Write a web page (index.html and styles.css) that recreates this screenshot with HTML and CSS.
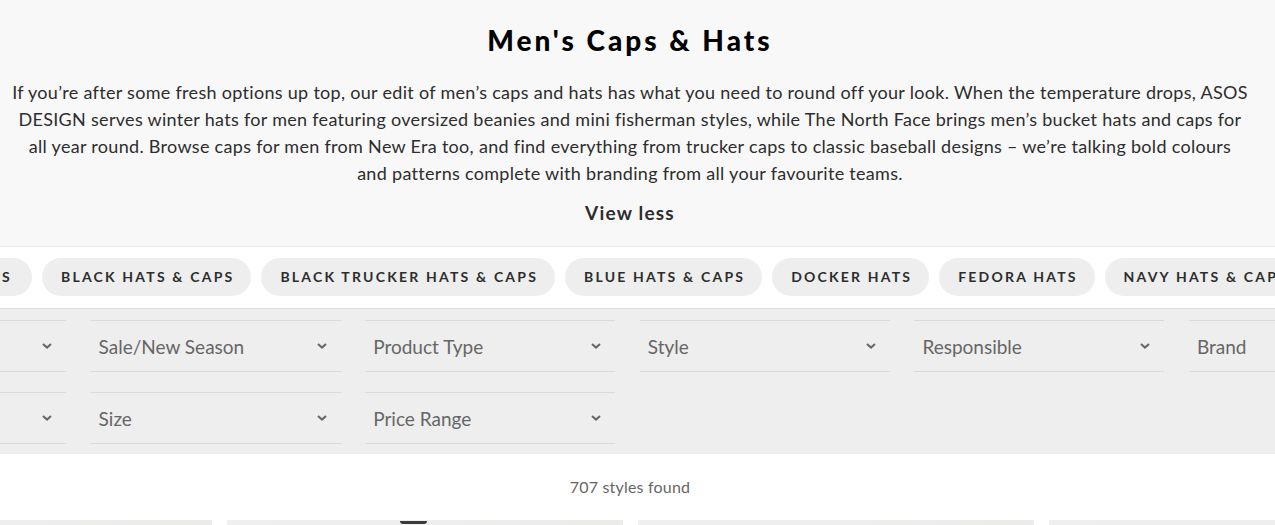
FILE: index.html
```html
<!DOCTYPE html>
<html lang="en">
<head>
<meta charset="utf-8">
<title>Men's Caps &amp; Hats</title>
<link rel="stylesheet" href="styles.css">
</head>
<body>
<header class="intro">
  <h1 class="intro-title">Men's Caps &amp; Hats</h1>
  <p class="intro-text">If you’re after some fresh options up top, our edit of men’s caps and hats has what you need to round off your look. When the temperature drops, ASOS DESIGN serves winter hats for men featuring oversized beanies and mini fisherman styles, while The North Face brings men’s bucket hats and caps for all year round. Browse caps for men from New Era too, and find everything from trucker caps to classic baseball designs – we’re talking bold colours and&nbsp;patterns complete with branding from all your favourite teams.</p>
  <button class="intro-toggle" type="button">View less</button>
</header>

<nav class="chips">
  <div class="chip-lead"><a class="chip" href="#">BASEBALL CAPS</a></div>
  <a class="chip" href="#">BLACK HATS &amp; CAPS</a>
  <a class="chip" href="#">BLACK TRUCKER HATS &amp; CAPS</a>
  <a class="chip" href="#">BLUE HATS &amp; CAPS</a>
  <a class="chip" href="#">DOCKER HATS</a>
  <a class="chip" href="#">FEDORA HATS</a>
  <a class="chip" href="#">NAVY HATS &amp; CAPS</a>
  <a class="chip" href="#">RED HATS &amp; CAPS</a>
</nav>

<section class="filters">
  <div class="filter-grid">
    <div class="filter"><span>Sort</span><svg class="chev" viewBox="0 0 10 6"><path d="M1 1l4 3.6L9 1"/></svg></div>
    <div class="filter"><span>Sale/New Season</span><svg class="chev" viewBox="0 0 10 6"><path d="M1 1l4 3.6L9 1"/></svg></div>
    <div class="filter"><span>Product Type</span><svg class="chev" viewBox="0 0 10 6"><path d="M1 1l4 3.6L9 1"/></svg></div>
    <div class="filter"><span>Style</span><svg class="chev" viewBox="0 0 10 6"><path d="M1 1l4 3.6L9 1"/></svg></div>
    <div class="filter"><span>Responsible</span><svg class="chev" viewBox="0 0 10 6"><path d="M1 1l4 3.6L9 1"/></svg></div>
    <div class="filter"><span>Brand</span><svg class="chev" viewBox="0 0 10 6"><path d="M1 1l4 3.6L9 1"/></svg></div>
    <div class="filter"><span>Colour</span><svg class="chev" viewBox="0 0 10 6"><path d="M1 1l4 3.6L9 1"/></svg></div>
    <div class="filter"><span>Size</span><svg class="chev" viewBox="0 0 10 6"><path d="M1 1l4 3.6L9 1"/></svg></div>
    <div class="filter"><span>Price Range</span><svg class="chev" viewBox="0 0 10 6"><path d="M1 1l4 3.6L9 1"/></svg></div>
  </div>
</section>

<p class="count">707 styles found</p>

<section class="products">
  <div class="product"></div>
  <div class="product"><span class="hat-top"></span></div>
  <div class="product"></div>
  <div class="product"></div>
</section>
</body>
</html>
```

FILE: styles.css
```css
* { box-sizing: border-box; }
html, body { margin: 0; padding: 0; }
body {
  width: 1275px;
  overflow: hidden;
  background: #fff;
  font-family: Lato, "Liberation Sans", sans-serif;
  color: #2d2d2d;
}

.intro {
  background: #f8f8f8;
  border-bottom: 1px solid #ececec;
  padding: 22px 15px 21px 0;
  text-align: center;
}
.intro-title {
  margin: 0;
  font-size: 28px;
  line-height: 36px;
  font-weight: 900;
  letter-spacing: 3px;
  color: #000;
}
.intro-text {
  margin: 21px 0 0;
  padding: 0 10px;
  font-size: 18px;
  line-height: 27px;
  letter-spacing: 0.3px;
  color: #2d2d2d;
}
.intro-toggle {
  display: block;
  margin: 14px auto 0;
  padding: 0;
  border: 0;
  background: none;
  font-family: inherit;
  font-size: 19px;
  line-height: 24px;
  font-weight: 700;
  letter-spacing: 1.2px;
  color: #2d2d2d;
}

.chips {
  display: flex;
  gap: 10px;
  padding: 11px 0 12px;
  background: #fff;
  border-bottom: 1px solid #dcdcdc;
  overflow: hidden;
  white-space: nowrap;
}
.chip-lead {
  flex: 0 0 32px;
  min-width: 0;
  display: flex;
  justify-content: flex-end;
}
.chip-lead .chip {
  padding-right: 20px;
}
.chip {
  flex: 0 0 auto;
  display: block;
  height: 38px;
  line-height: 38px;
  padding: 0 17px 0 19px;
  border-radius: 19px;
  background: #eee;
  color: #2d2d2d;
  text-decoration: none;
  font-size: 14px;
  font-weight: 700;
  letter-spacing: 2.2px;
}

.filters {
  background: #eee;
  padding: 11px 0 10px;
  overflow: hidden;
}
.filter-grid {
  display: grid;
  grid-template-columns: repeat(6, 250px);
  column-gap: 24.6px;
  row-gap: 20px;
  margin-left: -184px;
}
.filter {
  height: 52px;
  border-top: 1px solid #dadada;
  border-bottom: 1px solid #dadada;
  display: flex;
  align-items: center;
  justify-content: space-between;
  padding: 0 14px 0 8px;
  font-size: 19px;
  color: #666;
}
.chev {
  width: 10px;
  height: 6px;
  fill: none;
  stroke: #666;
  stroke-width: 2;
}

.count {
  margin: 0;
  padding: 23px 15px 23px 0;
  text-align: center;
  font-size: 16px;
  line-height: 20px;
  letter-spacing: 0.2px;
  color: #666;
}

.products {
  display: flex;
  gap: 15px;
  margin-left: -184px;
}
.product {
  flex: 0 0 396px;
  height: 300px;
  background: linear-gradient(90deg, #efefef, #ebecea);
  position: relative;
}
.hat-top {
  position: absolute;
  left: 173px;
  top: 1px;
  width: 27px;
  height: 3px;
  border-radius: 0 0 14px 14px;
  background: #3a3a40;
}
```
